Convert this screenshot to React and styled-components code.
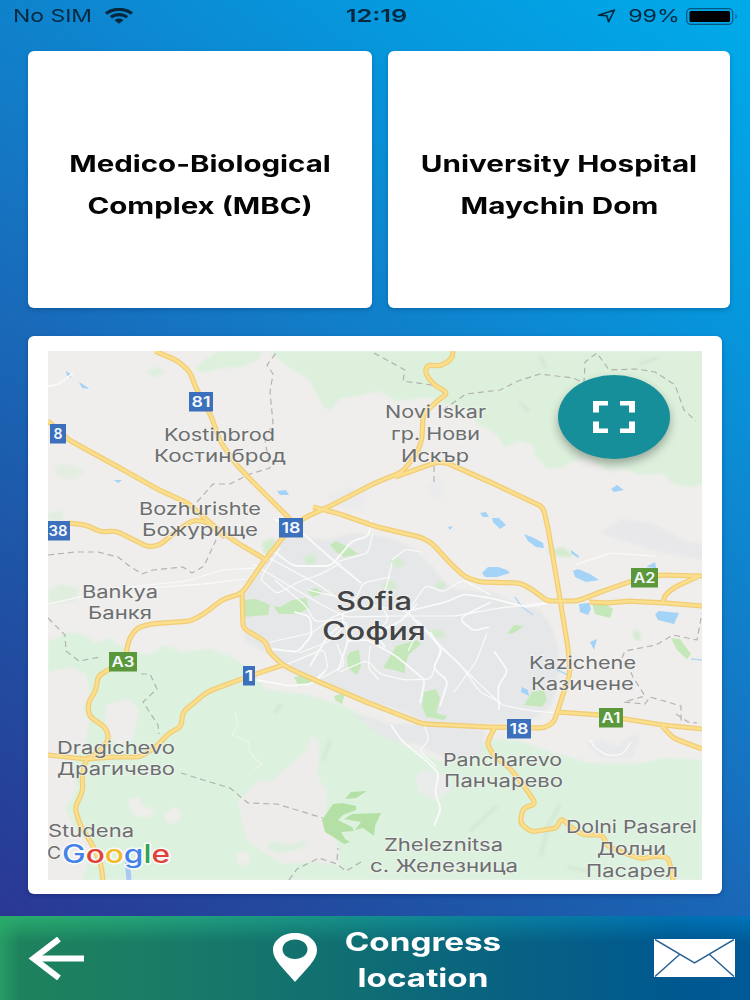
import React from 'react'
import styled, { createGlobalStyle } from 'styled-components';

const GlobalStyle = createGlobalStyle`
    * {
        box-sizing: border-box;
    }

    body {
        margin: 0;
        font-family: Inter, "Liberation Sans", sans-serif;
    }
`

const Screen = styled.div`
    width: 750px;
    height: 1000px;
    overflow: hidden;
    display: flex;
    flex-direction: column;
    background: linear-gradient(38deg, #2d3190 0%, #2050a3 25%, #1576c3 53%, #0697dc 80%, #00abea 100%);
`

const StatusBar = styled.header`
    display: grid;
    grid-template-columns: 1fr auto 1fr;
    align-items: center;
    height: 32px;
    padding: 0 11px 0 14px;
    color: #06283f;
`

const StatusSide = styled.div`
    display: flex;
    align-items: center;
    justify-content: ${(p) => (p.$end ? 'flex-end' : 'flex-start')};
`

// Fixed box whose text is widened horizontally
const Wide = styled.span`
    display: flex;
    justify-content: center;
    width: ${(p) => p.$width}px;
    font-size: ${(p) => p.$size}px;
    font-weight: ${(p) => p.$weight || 400};
    line-height: ${(p) => p.$line || p.$size + 4}px;
    white-space: nowrap;
    transform: scaleX(${(p) => p.$stretch || 1.28});
`

const Venues = styled.div`
    display: grid;
    grid-template-columns: 344px 342px;
    gap: 16px;
    margin: 19px 0 0 28px;
`

const VenueCard = styled.button`
    display: flex;
    flex-direction: column;
    align-items: center;
    justify-content: center;
    height: 257px;
    padding: 11px 0 0;
    border: 0;
    border-radius: 6px;
    background: #fff;
    color: #050505;
    font-family: inherit;
    box-shadow: 0 2px 4px rgba(0, 30, 80, 0.25);
`

const MapCard = styled.main`
    width: 694px;
    height: 558px;
    margin: 28px 0 0 28px;
    padding: 15px 20px 14px;
    border-radius: 6px;
    background: #fff;
    box-shadow: 0 2px 4px rgba(0, 20, 80, 0.3);
`

const MapView = styled.div`
    position: relative;
    height: 529px;

    > svg {
        display: block;
    }
`

const FullscreenButton = styled.button`
    position: absolute;
    top: 24px;
    left: 510px;
    width: 112px;
    height: 84px;
    display: flex;
    align-items: center;
    justify-content: center;
    padding: 0;
    border: 0;
    border-radius: 50%;
    background: #178f9a;
    box-shadow: 0 5px 10px rgba(0, 0, 0, 0.3);
`

const BottomBar = styled.footer`
    display: grid;
    grid-template-columns: 245px 1fr 96px;
    align-items: center;
    height: 84px;
    margin-top: 22px;
    padding-left: 28px;
    background:
        linear-gradient(90deg, rgba(42, 172, 107, 0.6) 0, rgba(42, 172, 107, 0) 20px),
        linear-gradient(to bottom, rgba(0, 20, 50, 0) 0, rgba(0, 20, 50, 0.27) 26px),
        linear-gradient(90deg, #2aac6b 0%, #24a477 18%, #169189 45%, #0a7fa0 68%, #0071b2 90%, #0074bc 100%);
    color: #fff;
`

const Title = styled.div`
    display: flex;
    align-items: center;

    > svg {
        flex: none;
        margin-top: -1px;
    }
`

const TitleText = styled.div`
    display: flex;
    flex-direction: column;
    margin: 3px 0 0 28px;
`

const TERRAIN = [
  ['#dcf0dc', 'M268 351 276 357 289 367 309 379 318 397 324 407 330 411 339 399 362 395 379 391 397 401 428 397 441 403 462 407 480 425 496 434 505 447 520 441 533 444 535 455 545 467 558 469 576 460 590 459 607 470 622 468 640 475 663 473 673 484 690 487 702 484V351Z'],
  ['#dcf0dc', 'M205 360 218 351H262L258 360 240 367 220 368 207 372 194 370Z'],
  ['#dfefdf', 'M145 372 159 366 165 372 154 378Z'],
  ['#e3eee1', 'M55 464 72 465 85 471 73 480 58 477Z'],
  ['#e0eee0', 'M48 591 62 584 79 588 76 601 48 604Z'],
  ['#e1eee0', 'M48 513 62 511 64 520 48 521Z'],
  ['#dcf1de', 'M48 642 69 632 84 635 95 643 110 638 125 650 147 655 156 652 164 645 182 652 210 649 232 657 252 671 266 690 303 694 342 705 366 718 396 741 423 755 450 764 490 739 519 741 554 753 590 763 635 764 665 758 702 760V880H48Z'],
  ['#eeedeb', 'M48 672 72 667 86 674 91 699 82 708 90 721 85 745 72 763 77 790 65 808 75 829 94 848 82 880H48Z'],
  ['#eeedeb', 'M106 705 129 698 139 710 133 739 116 746 105 730Z'],
  ['#edecea', 'M306 751 313 734 320 744 317 775 327 790 326 820 333 833 339 849 340 866 316 862 282 864 264 853 247 840 241 816 238 801 258 781 273 781 290 764Z'],
  ['#e9ecea', 'M415 776 423 770 450 775 451 791 436 801 419 793Z'],
  ['#eeeeea', 'M127 799 139 797 144 807 155 808 150 818 133 816ZM164 814 177 805 182 815 175 825 165 822ZM236 854 247 850 251 859 244 867 237 863Z'],
  ['#dceedd', 'M269 841 289 845 309 840 302 848 281 853 268 849Z'],
  ['#e6e7e8', 'M274 540 302 536 324 540 352 533 387 537 413 548 431 565 445 582 456 590 493 592 515 603 539 609 552 627 559 651 558 684 551 707 532 720 489 724 443 728 421 720 394 708 366 702 337 691 311 680 286 671 270 655 245 641 244 593 264 565Z'],
  ['#e6e7e8', 'M352 711 390 724 429 725 484 730 482 755 451 761 418 744 392 741 371 729Z'],
  ['#e8e8ea', 'M600 533 621 519 650 522 685 541 702 544V560L664 553 626 542Z'],
  ['#e8e9eb', 'M586 745 600 740 618 746 632 735 640 736 633 758 602 758Z'],
  ['#ebebed', 'M325 497 352 486 365 496 363 510 340 508ZM427 487 440 476 444 499 429 495Z'],
]

// Parks and denser forest
const PARKS = [
  'M330 545 336 541 350 548 358 554 344 557 336 552Z',
  'M242 600 256 599 270 605 268 615 243 617Z',
  'M273 606 280 607 292 600 306 598 309 608 298 614 279 614Z',
  'M307 591 316 588 324 593 313 597Z',
  'M350 652 359 650 361 666 357 675 348 668 347 657Z',
  'M396 646 417 640 421 644 409 654 405 665 405 673 390 669 383 668Z',
  'M294 677 304 675 313 683 299 687ZM334 696 345 693 342 704 335 700Z',
  'M424 692 436 689 440 698 436 714 427 718 422 707Z',
  'M532 692 544 690 547 700 542 707 524 705Z',
  'M592 603 607 605 613 609 610 618 595 614Z',
  'M671 638 680 639 691 654 687 659 677 650Z',
  'M507 634 514 625 524 626 514 633Z',
  'M425 711 435 713 447 716 444 720 428 717Z',
]
const PALE_PARKS = 'M304 557 316 553 315 565 306 565ZM380 585 392 580 399 588 388 590ZM434 583 444 581 446 587 438 591ZM427 630 443 630 446 637 434 638ZM389 561 399 557 405 564 397 568ZM546 552 562 547 574 556 561 557ZM262 542 274 538 274 550 265 556ZM633 630 640 632 641 641 634 639Z'

const FOREST = 'M322 820 333 804 342 803 356 806 356 810 343 815 338 820 352 827 354 831 341 832 345 839 350 842 344 844 335 838 325 832ZM344 819 352 814 381 813 375 826 374 836 363 828 355 830 361 822ZM345 799 351 792 367 791 356 798Z'

const WATER = 'M66 371 71 374 71 378 67 376ZM79 382 87 387 89 389 82 388ZM277 491 286 490 289 495 280 495ZM114 480 122 480 118 483ZM480 513 486 512 489 517 483 517ZM492 518 499 518 506 525 500 529 493 522ZM524 534 534 538 543 543 544 548 536 547 528 541ZM482 573 488 567 498 567 507 570 510 573 497 577 485 577ZM573 571 578 569 590 574 599 580 586 582 575 577ZM611 489 617 485 624 490 614 492ZM646 567 655 562 656 568ZM655 614 659 611 679 613 674 624 658 620ZM579 604 589 603 591 609 588 615 580 612ZM590 642 597 639 594 650ZM522 687 528 690 529 696 521 692ZM571 550 579 556 578 558 571 553ZM448 527 453 526 450 530Z'

const MINOR_ROADS = [
  'M274 519 300 531 333 560 361 583',
  'M253 564 288 585 324 606 346 617 395 616 455 616 500 608 551 602',
  'M262 554 319 585 343 602',
  'M271 549 293 566 331 566 352 541 369 536 371 520',
  'M336 562 368 553 373 533',
  'M280 548 260 579 277 594 300 581 319 575 341 563',
  'M294 612 310 616 312 635 298 652 272 649',
  'M270 642 312 633 334 616 372 605 408 612 420 628 408 651',
  'M299 653 328 642 342 629 343 613',
  'M310 666 327 637 346 620 348 641 338 671',
  'M408 612 440 647 460 664 480 692 501 703',
  'M410 608 426 585 443 592 463 580 491 595',
  'M409 611 446 602 464 594 490 598 526 607 548 603',
  'M417 620 440 645 472 677 502 705',
  'M487 633 476 662 454 692',
  'M491 602 463 616 461 621 474 631 489 627',
  'M340 672 367 660 380 674 405 680 431 679 441 648',
  'M370 646 368 668 379 680',
  'M385 647 374 633 400 622 417 604',
  'M392 563 386 588 380 603 389 619 376 633',
  'M392 560 405 549 421 552',
  'M430 632 442 651 433 668 448 681 440 706',
  'M318 680 328 668 324 649 307 656 281 667',
  'M322 678 345 665 337 644',
  'M347 641 368 640 396 656 425 680 420 703',
  'M308 590 334 596 355 601 363 583 390 577',
  'M275 580 306 606 315 622 344 618',
  'M257 680 290 686 311 684 325 671',
  'M48 604 120 588 187 581 222 570 255 568',
  'M120 590 203 584 245 579',
  'M391 725 402 741 423 758 439 773 435 793 441 809 434 826',
  'M424 723 429 740 419 751 437 767',
  'M502 705 532 711 557 713',
  'M494 651 508 671 498 686 499 710',
  'M575 565 610 553 655 556',
  'M590 740 596 749 609 756 623 754 631 742',
  'M73 373 58 385 48 386',
]

const ROADS = [
  'M155 351 178 361 190 372 196 388 211 416 220 441 235 463 251 480 291 520',
  'M48 421 69 440 120 468 159 490 188 503 215 527 236 542 268 561',
  'M68 523 86 525 101 532 116 531 132 539 148 547 160 545 174 533 184 526 193 520 207 522 225 537',
  'M453 351 452 359 441 366 427 365 425 373 433 384 448 393 436 402 423 415 422 440 416 455 402 472 375 483 330 506 304 518 288 531 265 560 242 593 222 600 205 613 191 621 150 624 137 628 129 639 125 658 110 669 98 676 96 690 88 703 89 716 106 728 109 739 99 752 86 759 82 777 83 790 75 808 80 825 92 844 101 864 103 880',
  'M395 477 437 462 447 463 490 482 543 507 548 528 558 587 568 648 570 673 558 710 554 722 545 728 490 727 423 724 387 710 366 702 317 681 295 671 283 665 269 652 266 642 243 628 242 593',
  'M313 507 340 514 377 527 420 537 432 543 449 562 465 577 480 582 520 583 533 590 547 601 577 601 606 590 632 581 660 575 702 576',
  'M589 602 610 603 628 601 665 603 702 606',
  'M663 602 665 595 675 587 697 577',
  'M48 755 86 759 112 757 140 757 156 747 169 733 181 727 183 712 207 692 233 682 256 674 283 665',
  'M557 712 600 715 663 725 702 729',
  'M662 726 673 738 702 749',
  'M495 727 487 743 493 755 510 768 526 789 536 804 523 808 520 823 531 832 557 828 561 818 572 828 583 835 603 835 607 846 624 853 642 859 654 856 668 857 671 869 673 880',
]

const BORDERS = 'M48 555 75 552 98 552 118 557 128 565 142 574 153 570 183 567 192 573 204 566 216 540M197 502 213 484 230 484 250 474 270 468 265 441 273 423 270 392 273 374 267 365 276 353M374 353 405 370 403 381 439 386M443 410 466 394 500 390 518 381 540 374 573 378 584 383 585 362 597 353 609 370 637 369 655 372 675 385 684 410 696 421M434 466 434 482M48 618 65 635 66 651 79 661 100 657M141 674 150 674 157 689 143 702 158 725 159 734M181 773 210 782 230 788 248 803 277 804 323 818M289 880 297 869 319 858 337 864 346 871 361 862M337 860 338 848M622 658 625 651 656 645 673 635 697 640 702 613M627 663 633 677 645 696 624 702 645 704 650 697 681 706 681 723M676 714 688 722 697 723'

// text, left, baseline, width
const LABELS = [
  ['Novi Iskar', 385, 417.5, 101],
  ['гр. Нови', 391, 439.5, 89],
  ['Искър', 401, 461.5, 68],
  ['Kostinbrod', 164, 440.5, 111],
  ['Костинброд', 154, 461.5, 132],
  ['Bozhurishte', 139, 514.5, 122],
  ['Божурище', 142, 535.5, 116],
  ['Bankya', 82, 597.5, 76],
  ['Банкя', 88, 618.5, 64],
  ['Kazichene', 529, 668.5, 107],
  ['Казичене', 531, 689.5, 103],
  ['Dragichevo', 57, 753.5, 118],
  ['Драгичево', 57, 774.5, 118],
  ['Studena', 48, 837, 86],
  ['С', 47, 858.5, 14],
  ['Pancharevo', 443, 766, 119],
  ['Панчарево', 444, 787, 119],
  ['Zheleznitsa', 384, 851, 119],
  ['с. Железница', 370, 872, 148],
  ['Dolni Pasarel', 566, 833, 131],
  ['Долни', 597, 854.5, 69],
  ['Пасарел', 586, 876.5, 92],
]

const SHIELDS = [
  ['81', 189, 392, 24],
  ['8', 50, 424, 16],
  ['38', 46, 521, 24],
  ['18', 279, 518, 24],
  ['1', 243, 666, 12],
  ['18', 507, 719, 24],
  ['A2', 631, 568, 27],
  ['A3', 109, 652, 28],
  ['A1', 599, 708, 24],
]

// Rounds the corners of a polyline path
function rounded(d, radius = 5) {
  const n = d.match(/[\d.]+/g).map(Number)
  const pts = []
  for (let i = 0; i < n.length; i += 2) pts.push([n[i], n[i + 1]])
  const toward = (a, b) => {
    const len = Math.hypot(b[0] - a[0], b[1] - a[1])
    const t = Math.min(radius / len, 0.5)
    return `${(a[0] + (b[0] - a[0]) * t).toFixed(1)} ${(a[1] + (b[1] - a[1]) * t).toFixed(1)}`
  }
  let out = `M${pts[0].join(' ')}`
  for (let i = 1; i < pts.length - 1; i++) {
    out += `L${toward(pts[i], pts[i - 1])}Q${pts[i].join(' ')} ${toward(pts[i], pts[i + 1])}`
  }
  return out + `L${pts[pts.length - 1].join(' ')}`
}

function MapLabel({ text, x, y, width, size = 17.3, fill = '#6c6e70', weight = 400 }) {
  return (
    <text
      x={x} y={y} textLength={width} lengthAdjust="spacingAndGlyphs"
      fontSize={size} fontWeight={weight} fill={fill}
      stroke="#f4f4f2" strokeWidth="2" strokeOpacity="0.6" paintOrder="stroke"
    >
      {text}
    </text>
  )
}

function Shield({ text, x, y, width }) {
  const inner = text.length === 1 ? 9 : width - 5
  return (
    <g>
      <rect x={x} y={y} width={width} height="19.5" fill={text[0] === 'A' ? '#5b983b' : '#3c70bd'} />
      <text
        x={x + (width - inner) / 2} y={y + 15} textLength={inner} lengthAdjust="spacingAndGlyphs"
        fontSize="14.500" fontWeight="600" fill="#f4f8fc"
      >
        {text}
      </text>
    </g>
  )
}

function SofiaMap() {
  return (
    <svg width="654" height="529" viewBox="48 351 654 529" strokeLinejoin="round">
      <defs>
        <filter id="soft"><feGaussianBlur stdDeviation="1.6" /></filter>
        <filter id="softer"><feGaussianBlur stdDeviation="0.5" /></filter>
      </defs>
      <rect x="48" y="351" width="654" height="529" fill="#efeeec" />
      <g filter="url(#soft)">
        {TERRAIN.map(([fill, d]) => <path key={d} d={d} fill={fill} />)}
        <path d={PALE_PARKS} fill="#d3ebcf" />
        <g stroke="#cbdccb" strokeWidth="3" fill="none" opacity="0.5">
          <path d="M540 356 546 368M640 364 658 358M275 713 281 704M520 402 529 412M560 805 548 826 541 856M497 806 470 831M323 761 330 741M588 871 568 867" />
        </g>
      </g>
      <g filter="url(#softer)">
        {PARKS.map((d) => <path key={d} d={d} fill="#c5e8ba" />)}
        <path d={FOREST} fill="#b5e0a5" />
        <path d={WATER} fill="#a3d3f6" />
        <path d="M515 597 521 606 533 615M549 666 568 675M691 659 702 660M508 768 522 785" stroke="#b7d8f3" strokeWidth="1.5" fill="none" />
        <path d="M127 858 129 880" stroke="#a9c9f5" strokeWidth="5" />
        <g fill="none" stroke="#fafafa">
          {MINOR_ROADS.map((d, i) => <path key={d} d={rounded(d)} strokeWidth={i % 3 ? 1.2 : 1.8} />)}
          <path d="M235 711 238 724 232 735 248 741 250 753 262 765 254 769" stroke="#edf6eb" strokeWidth="1.2" />
        </g>
        <path d={BORDERS} fill="none" stroke="#b2b3b1" strokeWidth="1.2" strokeDasharray="6 4" />
        <g fill="none" stroke="#f1cd78" strokeWidth="5.2">
          {ROADS.map((d) => <path key={d} d={rounded(d)} />)}
        </g>
        <g fill="none" stroke="#fbdf8c" strokeWidth="2.6">
          {ROADS.map((d) => <path key={d} d={rounded(d)} />)}
        </g>
      </g>
      {LABELS.map(([text, x, y, width]) => (
        <MapLabel key={text} text={text} x={x} y={y} width={width} />
      ))}
      <MapLabel text="Sofia" x={336} y={609.5} width={76} size={25} fill="#424446" weight={500} />
      <MapLabel text="София" x={322} y={639.5} width={104} size={25} fill="#424446" weight={500} />
      {SHIELDS.map(([text, x, y, width]) => (
        <Shield key={text + x} text={text} x={x} y={y} width={width} />
      ))}
      <text
        x="62" y="862.5" textLength="108" lengthAdjust="spacingAndGlyphs"
        fontSize="25.500" fontWeight="500"
        stroke="#fff" strokeWidth="3" strokeOpacity="0.85" paintOrder="stroke"
      >
        <tspan fill="#4583ea">G</tspan>
        <tspan fill="#e04438">o</tspan>
        <tspan fill="#f3b927">o</tspan>
        <tspan fill="#4583ea">g</tspan>
        <tspan fill="#34a350">l</tspan>
        <tspan fill="#e04438">e</tspan>
      </text>
    </svg>
  )
}

function WifiIcon() {
  return (
    <svg width="28" height="16" viewBox="0 0 28 16" fill="none" stroke="#06283f" strokeWidth="3.2">
      <path d="M1 5.6C8 -.1 20 -.1 27 5.6" />
      <path d="M5.8 9.3C10.5 5.6 17.5 5.6 22.2 9.3" />
      <path d="M9.4 12.1C12 10 16 10 18.6 12.1L14 15.8Z" fill="#06283f" stroke="none" />
    </svg>
  )
}

function BatteryIcon() {
  return (
    <svg width="53" height="17" viewBox="0 0 53 17">
      <rect x=".7" y=".7" width="46" height="15.6" rx="4" fill="none" stroke="#0a5580" strokeWidth="1.2" />
      <rect x="3.5" y="3" width="40.5" height="11" rx="1.5" fill="#000" />
      <path d="M49.5 6Q52 8.500 49.500 11Z" fill="#0a5580" />
    </svg>
  )
}

function App() {
  return (
    <>
      <GlobalStyle />
      <Screen>
        <StatusBar>
          <StatusSide>
            <Wide $width={77} $size={17.5} $stretch={1.31}>No SIM</Wide>
            <svg width="14" height="1" />
            <WifiIcon />
          </StatusSide>
          <Wide $width={61} $size={17.5} $weight={600} $stretch={1.45}>12:19</Wide>
          <StatusSide $end>
            <svg width="19" height="14" viewBox="0 0 19 14" fill="none" stroke="#06283f" strokeWidth="1.6" strokeLinejoin="round">
              <path d="M1.500 6.300 17.500 1 11.500 12.800 9.800 6.800Z" />
            </svg>
            <svg width="13" height="1" />
            <Wide $width={50} $size={17.5} $stretch={1.33}>99%</Wide>
            <svg width="7" height="1" />
            <BatteryIcon />
          </StatusSide>
        </StatusBar>
        <Venues>
          <VenueCard>
            <Wide $width={260} $size={23} $line={42} $weight={700}>Medico-Biological</Wide>
            <Wide $width={226} $size={23} $line={42} $weight={700}>Complex (MBC)</Wide>
          </VenueCard>
          <VenueCard>
            <Wide $width={278} $size={23} $line={42} $weight={700} $stretch={1.29}>University Hospital</Wide>
            <Wide $width={199} $size={23} $line={42} $weight={700} $stretch={1.29}>Maychin Dom</Wide>
          </VenueCard>
        </Venues>
        <MapCard>
          <MapView>
            <SofiaMap />
            <FullscreenButton aria-label="Fullscreen">
              <svg width="42" height="32" viewBox="0 0 42 32" fill="none" stroke="#fff">
                <path d="M0 2.200H15M27 2.200H42M0 29.800H15M27 29.800H42" strokeWidth="4.400" />
                <path d="M3 0V11.500M39 0V11.500M3 20.500V32M39 20.500V32" strokeWidth="6" />
              </svg>
            </FullscreenButton>
          </MapView>
        </MapCard>
        <BottomBar>
          <svg width="56" height="43" viewBox="0 0 56 43" fill="none" stroke="#fff">
            <path d="M5 21.500H56" strokeWidth="6" />
            <path d="M31 2 5.500 21.500 31 41" strokeWidth="6" />
          </svg>
          <Title>
            <svg width="44" height="49" viewBox="0 0 44 49">
              <path
                d="M22 0C9.500 0 0 7.500 0 17 0 27 10 35 22 49 34 35 44 27 44 17 44 7.500 34.500 0 22 0ZM22 6.500C29.200 6.500 34.500 10.800 34.500 16.200S29.200 26 22 26 9.500 21.600 9.500 16.200 14.800 6.500 22 6.500Z"
                fill="#fff" fillRule="evenodd"
              />
            </svg>
            <TitleText>
              <Wide $width={156} $size={25} $line={36} $weight={700} $stretch={1.33}>Congress</Wide>
              <Wide $width={156} $size={25} $line={36} $weight={700} $stretch={1.33}>location</Wide>
            </TitleText>
          </Title>
          <svg width="81" height="38" viewBox="0 0 81 38">
            <rect width="81" height="38" fill="#fff" />
            <path d="M1 .5 40.500 24 80 .5M1 37.500 25.500 15.500M80 37.500 55.500 15.500" fill="none" stroke="#2b6393" strokeWidth="1.500" />
          </svg>
        </BottomBar>
      </Screen>
    </>
  )
}

export default App
